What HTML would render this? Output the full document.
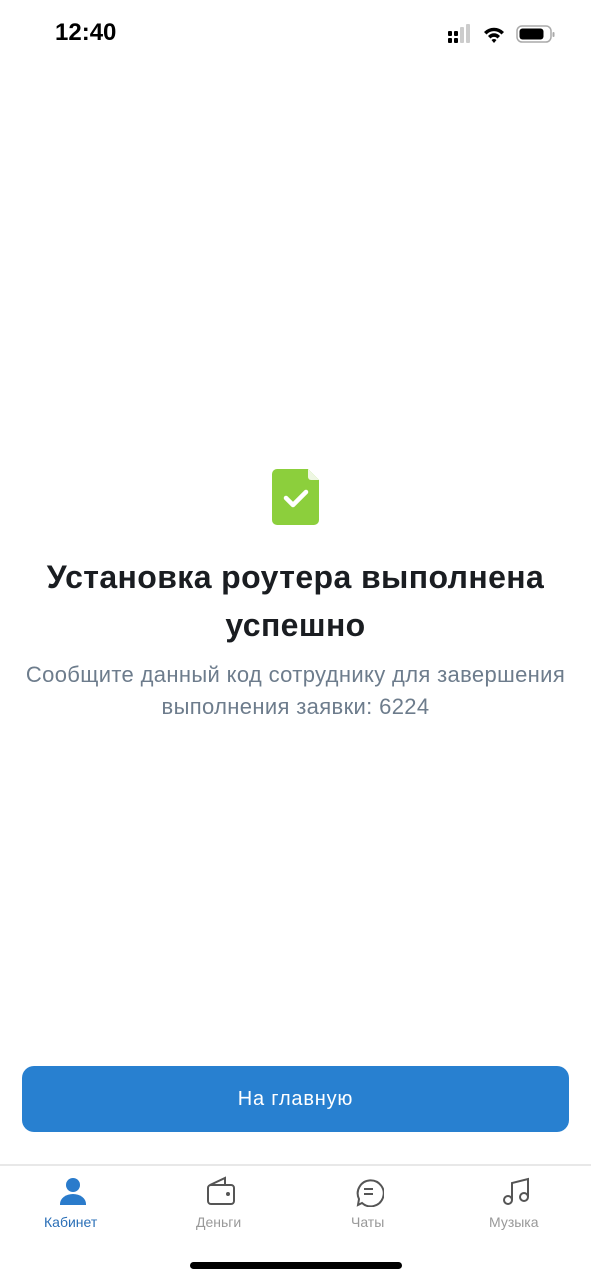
<!DOCTYPE html>
<html><head><meta charset="utf-8"><style>
body{margin:0;width:591px;height:1280px;background:#fff;position:relative;overflow:hidden;font-family:"Liberation Sans","DejaVu Sans",sans-serif}
.abs{position:absolute}
.t{left:0;width:591px;text-align:center}
</style></head><body>
<div class="abs" style="left:55px;top:19px;font-size:24px;font-weight:bold;color:#000">12:40</div>
<svg class="abs" style="left:446px;top:24px" width="110" height="22" viewBox="0 0 110 22">
<rect x="2" y="7" width="4" height="5" rx="1" fill="#000"/><rect x="2" y="14" width="4" height="5" rx="1" fill="#000"/>
<rect x="8" y="7" width="4" height="5" rx="1" fill="#000"/><rect x="8" y="14" width="4" height="5" rx="1" fill="#000"/>
<rect x="14" y="3" width="4" height="16" rx="1" fill="#ccc"/><rect x="20" y="0" width="4" height="19" rx="1" fill="#ccc"/>
<path d="M38 8 a14 14 0 0 1 20 0 l-2.5 2.5 a10 10 0 0 0 -15 0z M42 12 a8 8 0 0 1 12 0 l-2.5 2.5 a4.5 4.5 0 0 0 -7 0z M45.5 16 l2.5 3 l2.5 -3 a3.5 3.5 0 0 0 -5 0z" fill="#000"/>
<rect x="71" y="2" width="34" height="16" rx="5" fill="none" stroke="#aaa" stroke-width="1.5"/>
<rect x="73.5" y="4.5" width="24" height="11" rx="3" fill="#000"/>
<rect x="106.5" y="8" width="2" height="5" rx="1" fill="#aaa"/>
</svg>
<svg class="abs" style="left:272px;top:469px" width="48" height="56" viewBox="0 0 48 56">
<path d="M5 0 H36 L47 11 V51 a5 5 0 0 1 -5 5 H5 a5 5 0 0 1 -5 -5 V5 a5 5 0 0 1 5 -5z" fill="#8ccf3c"/>
<path d="M36 0 V8 a3 3 0 0 0 3 3 H47z" fill="#eef7e2"/>
<path d="M14 29 l7 7 l13 -13" fill="none" stroke="#fff" stroke-width="4.5" stroke-linecap="round" stroke-linejoin="round"/>
</svg>
<div class="abs t" style="top:553px;font-size:32px;font-weight:bold;color:#1a1d21;line-height:48px;letter-spacing:0.4px">Установка роутера выполнена<br>успешно</div>
<div class="abs t" style="top:659px;font-size:22px;color:#6d7c8c;line-height:32px;letter-spacing:0.35px">Сообщите данный код сотруднику для завершения<br>выполнения заявки: 6224</div>
<div class="abs" style="left:22px;top:1066px;width:547px;height:66px;background:#2880d0;border-radius:12px;color:#fff;font-size:20px;text-align:center;line-height:66px;letter-spacing:0.8px">На главную</div>
<div class="abs" style="left:0;top:1164px;width:591px;height:2px;background:#e8e8e8"></div>
<svg class="abs" style="left:58px;top:1177px" width="30" height="30" viewBox="0 0 30 30"><circle cx="15" cy="8" r="7" fill="#2a7bcb"/><path d="M2 27 a13 10 0 0 1 26 0 v1 H2z" fill="#2a7bcb"/></svg>
<svg class="abs" style="left:206px;top:1176px" width="30" height="30" viewBox="0 0 30 30" fill="none" stroke="#555" stroke-width="2"><rect x="2" y="9" width="26" height="19" rx="3"/><path d="M4 9 L19 2 V9"/><circle cx="22" cy="18" r="1" fill="#555"/></svg>
<svg class="abs" style="left:354px;top:1177px" width="30" height="30" viewBox="0 0 30 30" fill="none" stroke="#555" stroke-width="2"><path d="M8 26 L4 28 L5 22 A13 13 0 1 1 8 26z"/><path d="M10 12h9M10 17h9"/></svg>
<svg class="abs" style="left:502px;top:1177px" width="30" height="30" viewBox="0 0 30 30" fill="none" stroke="#555" stroke-width="2"><circle cx="6" cy="23" r="4"/><circle cx="22" cy="20" r="4"/><path d="M10 23V6L26 2V20"/></svg>
<div class="abs" style="left:44px;top:1214px;font-size:14px;color:#2a6fb7">Кабинет</div>
<div class="abs" style="left:196px;top:1214px;font-size:14px;color:#999">Деньги</div>
<div class="abs" style="left:351px;top:1214px;font-size:14px;color:#999">Чаты</div>
<div class="abs" style="left:489px;top:1214px;font-size:14px;color:#999">Музыка</div>
<div class="abs" style="left:190px;top:1262px;width:212px;height:7px;background:#000;border-radius:4px"></div>
</body></html>
